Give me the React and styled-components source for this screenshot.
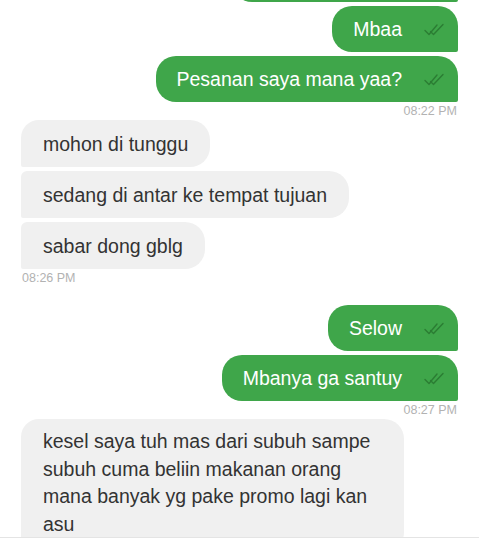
import styled, { createGlobalStyle } from 'styled-components';

const GREEN = '#3fa64a';
const GREY = '#f0f0f0';

const GlobalStyle = createGlobalStyle`
  html, body {
    margin: 0;
    padding: 0;
    background: #fff;
  }
  body {
    font-family: "Liberation Sans", Arial, sans-serif;
  }
`;

function DoubleCheck() {
  return (
    <CheckIcon viewBox="0 0 22 14" width="22" height="14">
      <path d="M1 7.5 L5 11.5 L13 2" />
      <path d="M6.5 8.5 L9.5 11.5 L19 1.5" />
    </CheckIcon>
  );
}

function Outgoing({ children }) {
  return (
    <OutBubble>
      <span>{children}</span>
      <DoubleCheck />
    </OutBubble>
  );
}

function App() {
  return (
    <Screen>
      <GlobalStyle />
      <Thread>
        <Group $side="right">
          <CutOff />
          <Outgoing>Mbaa</Outgoing>
          <Outgoing>Pesanan saya mana yaa?</Outgoing>
          <Time>08:22 PM</Time>
        </Group>

        <Group $side="left">
          <InBubble $first>mohon di tunggu</InBubble>
          <InBubble>sedang di antar ke tempat tujuan</InBubble>
          <InBubble>sabar dong gblg</InBubble>
          <Time>08:26 PM</Time>
        </Group>

        <Group $side="right" $gap="18px">
          <Outgoing>Selow</Outgoing>
          <Outgoing>Mbanya ga santuy</Outgoing>
          <Time>08:27 PM</Time>
        </Group>

        <Group $side="left">
          <InBubble $first $wide>
            kesel saya tuh mas dari subuh sampe subuh cuma beliin makanan orang
            mana banyak yg pake promo lagi kan asu
          </InBubble>
        </Group>
      </Thread>
      <Footer />
    </Screen>
  );
}

const Screen = styled.div`
  height: 540px;
  display: flex;
  flex-direction: column;
  overflow: hidden;
`;

const Thread = styled.main`
  flex: 1;
  overflow: hidden;
  padding: 0 21px;
`;

const Group = styled.section`
  display: flex;
  flex-direction: column;
  align-items: ${(p) => (p.$side === 'right' ? 'flex-end' : 'flex-start')};
  gap: 4px;
  margin-top: ${(p) => p.$gap || '0'};
`;

const CutOff = styled.div`
  width: 226px;
  height: 46px;
  margin-top: -44px;
  background: ${GREEN};
  border-radius: 20px 20px 2px 20px;
`;

const OutBubble = styled.div`
  display: flex;
  align-items: center;
  gap: 22px;
  padding: 10px 12px 10px 21px;
  background: ${GREEN};
  color: #fff;
  font-size: 19.5px;
  line-height: 26px;
  border-radius: 20px 20px 2px 20px;
`;

const CheckIcon = styled.svg`
  flex: none;
  margin-top: 2px;

  path {
    fill: none;
    stroke: #2b7d33;
    stroke-width: 1.4;
    stroke-linecap: round;
    stroke-linejoin: round;
  }
`;

const InBubble = styled.div`
  max-width: ${(p) => (p.$wide ? '339px' : 'none')};
  padding: ${(p) => (p.$wide ? '9px 22px 14px' : '10.5px 22px')};
  background: ${GREY};
  color: #333;
  font-size: 19.5px;
  line-height: ${(p) => (p.$wide ? '27.5px' : '26px')};
  border-radius: ${(p) => (p.$first ? '18px' : '6px')} 20px 20px 2px;
`;

const Time = styled.div`
  margin: -2px 1px 2px;
  color: #b2b2b2;
  font-size: 12.5px;
  line-height: 14px;
`;

const Footer = styled.footer`
  flex: none;
  height: 2px;
  border-top: 1px solid #e4e4e4;
`;

export default App;
